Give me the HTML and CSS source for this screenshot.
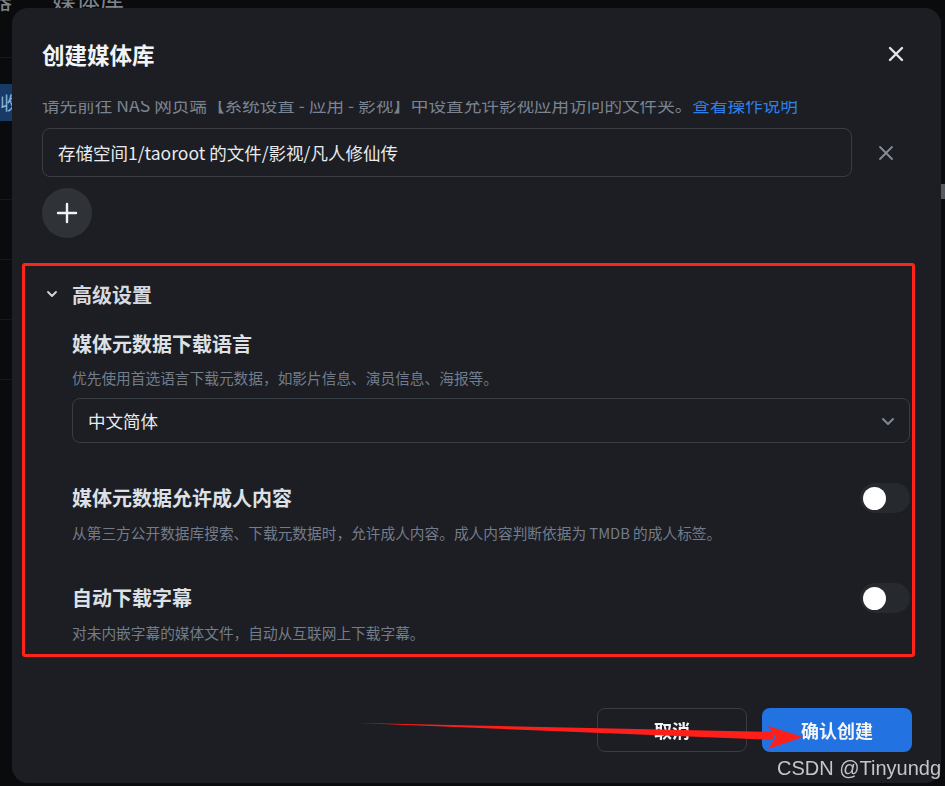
FILE: index.html
```html
<!DOCTYPE html>
<html lang="zh-CN">
<head>
  <title>创建媒体库</title>
  <meta charset="UTF-8">
  <link rel="stylesheet" href="styles.css">
</head>
<body>
<div class="app">
  <div class="app-top">
    <span class="app-top-prev">器</span>
    <span class="app-top-title">媒体库</span>
  </div>
  <div class="app-side">
    <div class="side-row side-first"></div>
    <div class="side-row side-active">收依</div>
    <div class="side-row"></div>
    <div class="side-row side-tall"></div>
    <div class="side-row side-tall"></div>
    <div class="side-row side-tall"></div>
  </div>
  <div class="app-right">
    <div class="right-mark"></div>
  </div>
</div>

<div class="modal">
  <div class="modal-header">
    <h2 class="modal-title">创建媒体库</h2>
    <button class="icon-btn close-btn" aria-label="关闭">
      <svg width="18" height="18" viewBox="0 0 18 18"><path d="M3 3L15 15M15 3L3 15" stroke="currentColor" stroke-width="2.4" stroke-linecap="round"/></svg>
    </button>
  </div>

  <div class="modal-body">
    <div class="scroll-content">
      <p class="hint">请先前往 NAS 网页端【系统设置 - 应用 - 影视】中设置允许影视应用访问的文件夹。<a href="#" class="link">查看操作说明</a></p>

      <div class="path-row">
        <div class="path-input">存储空间1/taoroot 的文件/影视/凡人修仙传</div>
        <button class="icon-btn clear-btn" aria-label="移除">
          <svg width="18" height="18" viewBox="0 0 18 18"><path d="M3 3L15 15M15 3L3 15" stroke="currentColor" stroke-width="1.8" stroke-linecap="round"/></svg>
        </button>
      </div>

      <button class="add-btn" aria-label="添加">
        <svg width="22" height="22" viewBox="0 0 22 22"><path d="M11 2V20M2 11H20" stroke="currentColor" stroke-width="2.4" stroke-linecap="round"/></svg>
      </button>

      <div class="advanced">
        <div class="advanced-head">
          <span class="chevron">
            <svg width="12" height="12" viewBox="0 0 12 12"><path d="M2 4L6 8L10 4" fill="none" stroke="currentColor" stroke-width="1.8" stroke-linecap="round" stroke-linejoin="round"/></svg>
          </span>
          <span class="advanced-title">高级设置</span>
        </div>

        <div class="setting">
          <div class="setting-title">媒体元数据下载语言</div>
          <div class="setting-desc">优先使用首选语言下载元数据，如影片信息、演员信息、海报等。</div>
          <div class="select">
            <span>中文简体</span>
            <svg width="16" height="16" viewBox="0 0 16 16"><path d="M3 6L8 11L13 6" fill="none" stroke="currentColor" stroke-width="2" stroke-linecap="round" stroke-linejoin="round"/></svg>
          </div>
        </div>

        <div class="setting setting-switch">
          <div class="setting-row">
            <div class="setting-title">媒体元数据允许成人内容</div>
            <span class="toggle"><span class="knob"></span></span>
          </div>
          <div class="setting-desc">从第三方公开数据库搜索、下载元数据时，允许成人内容。成人内容判断依据为 TMDB 的成人标签。</div>
        </div>

        <div class="setting setting-switch">
          <div class="setting-row">
            <div class="setting-title">自动下载字幕</div>
            <span class="toggle"><span class="knob"></span></span>
          </div>
          <div class="setting-desc">对未内嵌字幕的媒体文件，自动从互联网上下载字幕。</div>
        </div>
      </div>
    </div>
  </div>

  <div class="modal-footer">
    <button class="btn btn-ghost">取消</button>
    <button class="btn btn-primary">确认创建</button>
  </div>
</div>

<!-- annotations drawn over the screenshot -->
<div class="mark-box"></div>
<svg class="mark-arrow" width="945" height="786" viewBox="0 0 945 786">
  <polygon points="358,723 774,732 774,740" fill="#ff1f1a"/>
  <polygon points="768,726 803,737 768,749 776,737" fill="#ff1f1a"/>
</svg>
<div class="watermark">CSDN @Tinyundg</div>
</body>
</html>
```

FILE: styles.css
```css
* {
  box-sizing: border-box;
}

html, body {
  margin: 0;
  height: 100%;
}

body {
  background: #0a0b0d;
  font-family: "Noto Sans CJK SC", "Noto Sans", sans-serif;
  overflow: hidden;
  position: relative;
}

button {
  font-family: inherit;
  border: none;
  background: none;
  padding: 0;
  cursor: pointer;
}

p {
  margin: 0;
}

/* page under the dialog */
.app {
  height: 100%;
  position: relative;
}

.app-top {
  display: flex;
  align-items: center;
  height: 28px;
  margin-top: -16px;
  margin-left: -12px;
  font-size: 24px;
  color: #7e838b;
}

.app-top-title {
  margin-left: 40px;
}

.app-side {
  width: 40px;
}

.side-row {
  height: 27px;
  border-bottom: 1px solid #16181b;
}

.side-first {
  height: 46px;
  margin-bottom: 26px;
}

.side-active {
  height: 37px;
  background: #173a66;
  color: #8fb3e0;
  font-size: 18px;
  line-height: 37px;
  border-bottom: none;
  margin-bottom: 52px;
}

.side-tall {
  height: 60px;
}

.app-right {
  position: absolute;
  right: 0;
  top: 0;
  width: 4px;
  height: 100%;
}

.right-mark {
  margin-top: 200px;
  height: 15px;
  background: #555a60;
}

/* dialog */
.modal {
  position: fixed;
  left: 12px;
  top: 8px;
  width: 929px;
  height: 775px;
  background: #1c1e23;
  border-radius: 16px;
  display: flex;
  flex-direction: column;
}

.modal-header {
  display: flex;
  align-items: center;
  justify-content: space-between;
  padding: 32px 33px 33px 30px;
}

.modal-title {
  margin: 0;
  font-size: 22.5px;
  line-height: 28px;
  font-weight: 700;
  color: #f3f4f6;
}

.icon-btn {
  display: flex;
  align-items: center;
  justify-content: center;
}

.close-btn {
  width: 24px;
  height: 24px;
  color: #e3e6ea;
}

.modal-body {
  flex: 1;
  overflow: hidden;
  padding: 0 30px;
}

.scroll-content {
  margin-top: -8px;
}

.hint {
  font-size: 17.6px;
  line-height: 24px;
  color: #7b8391;
  white-space: nowrap;
}

.link {
  color: #2f7fe6;
  text-decoration: none;
}

.path-row {
  display: flex;
  align-items: center;
  margin-top: 11px;
}

.path-input {
  width: 810px;
  height: 49px;
  border: 1px solid #383d43;
  border-radius: 8px;
  padding: 0 15px;
  display: flex;
  align-items: center;
  font-size: 17.5px;
  color: #e8eaed;
}

.clear-btn {
  width: 20px;
  height: 20px;
  margin-left: 24px;
  color: #858d9a;
}

.add-btn {
  display: flex;
  align-items: center;
  justify-content: center;
  width: 50px;
  height: 50px;
  margin-top: 11px;
  border-radius: 50%;
  background: #2f3237;
  color: #f2f3f5;
}

.advanced {
  margin-top: 42px;
}

.advanced-head {
  display: flex;
  align-items: center;
  height: 28px;
  gap: 10px;
}

.chevron {
  display: flex;
  align-items: center;
  justify-content: center;
  width: 20px;
  color: #d3d7dd;
}

.advanced-title {
  font-size: 20px;
  font-weight: 700;
  color: #d6dae0;
}

.setting {
  margin-left: 30px;
  width: 838px;
}

.setting-title {
  font-size: 20px;
  line-height: 26px;
  font-weight: 700;
  color: #dde1e6;
}

.advanced-head + .setting {
  margin-top: 23px;
}

.setting-desc {
  margin-top: 11px;
  font-size: 14.7px;
  line-height: 20px;
  color: #737c8a;
}

.select {
  margin-top: 10px;
  height: 45px;
  border: 1px solid #383d43;
  border-radius: 8px;
  padding: 0 13px 0 15px;
  display: flex;
  align-items: center;
  justify-content: space-between;
  font-size: 17.5px;
  color: #e8eaed;
}

.select svg {
  color: #7f8897;
}

.setting-switch {
  margin-top: 40px;
}

.setting-switch .setting-desc {
  margin-top: 10px;
}

.setting-row {
  display: flex;
  align-items: center;
  justify-content: space-between;
  height: 30px;
}

.toggle {
  width: 50px;
  height: 30px;
  border-radius: 15px;
  background: #26292e;
  display: flex;
  align-items: center;
  padding-left: 3px;
}

.knob {
  width: 23px;
  height: 23px;
  border-radius: 50%;
  background: #ffffff;
}

.modal-footer {
  display: flex;
  justify-content: flex-end;
  gap: 15px;
  padding: 0 29px 31px 30px;
}

.btn {
  width: 150px;
  height: 44px;
  border-radius: 8px;
  font-size: 18px;
  font-weight: 700;
  color: #f3f4f6;
}

.btn-ghost {
  border: 1px solid #383d43;
}

.btn-primary {
  background: #2272e1;
}

/* annotations */
.mark-box {
  position: absolute;
  left: 22px;
  top: 263px;
  width: 893px;
  height: 394px;
  border: 3px solid #ff2419;
  border-radius: 3px;
  pointer-events: none;
}

.mark-arrow {
  position: absolute;
  left: 0;
  top: 0;
  pointer-events: none;
}

.watermark {
  position: absolute;
  right: 4px;
  bottom: 6px;
  font-family: "Liberation Sans", Arial, sans-serif;
  font-size: 20px;
  color: #c4c6c9;
}
```
